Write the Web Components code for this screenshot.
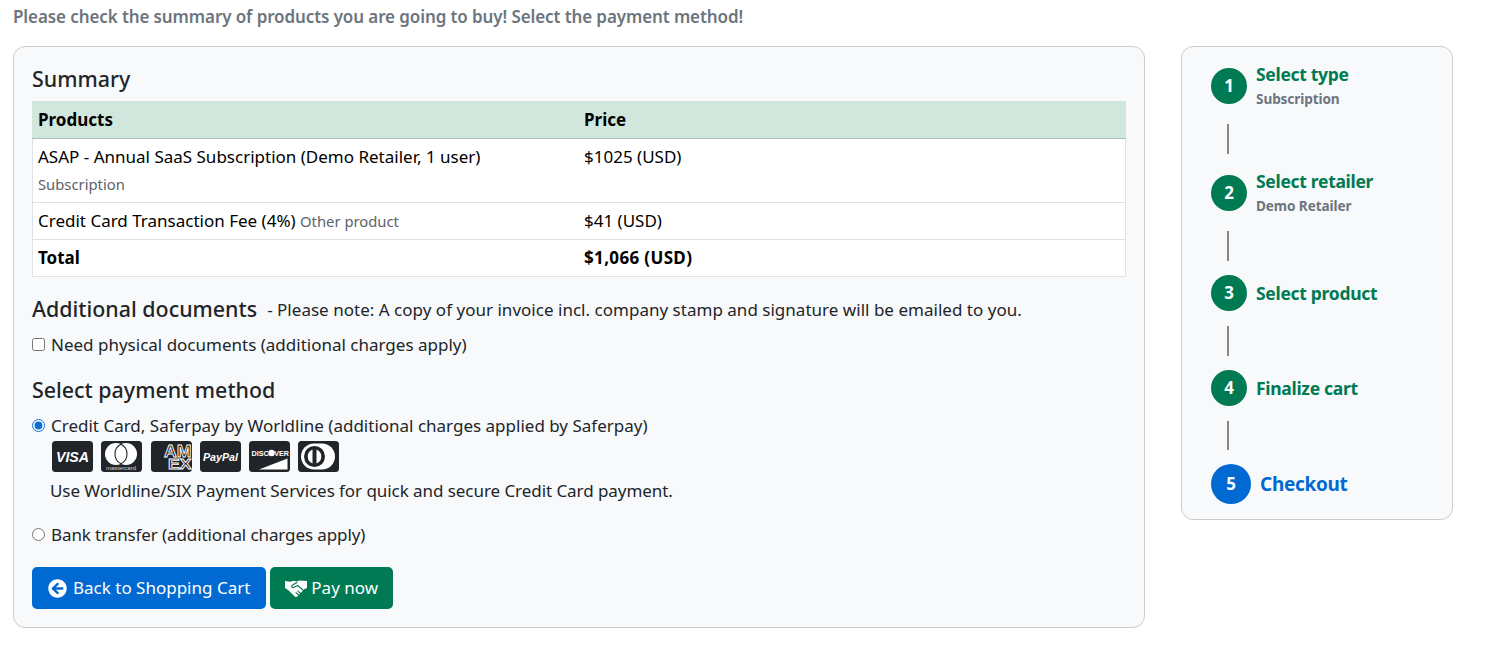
<!DOCTYPE html>
<html lang="en">
<head>
<meta charset="utf-8">
<title>Checkout</title>
<style>
    html, body { margin: 0; padding: 0; background: #fff; }
    body {
        font-family: "Noto Sans", "Open Sans", sans-serif;
        font-size: 17px;
        line-height: 24px;
        color: #212529;
    }
</style>
</head>
<body>
<checkout-page>
    <span slot="intro">Please check the summary of products you are going to buy! Select the payment method!</span>

    <panel-box slot="main" class="main">
        <section-title>Summary</section-title>
        <summary-table></summary-table>

        <docs-note></docs-note>

        <section-title spaced>Select payment method</section-title>
        <pay-option checked>
            Credit Card, Saferpay by Worldline (additional charges applied by Saferpay)
            <card-logos slot="extra"></card-logos>
            <span slot="note">Use Worldline/SIX Payment Services for quick and secure Credit Card payment.</span>
        </pay-option>
        <pay-option><span style="letter-spacing:-.1px">Bank transfer (additional charges apply)</span></pay-option>

        <action-row>
            <action-button color="#0069d2" icon="back">Back to Shopping Cart</action-button>
            <action-button color="#007a53" icon="hands">Pay now</action-button>
        </action-row>
    </panel-box>

    <order-steps slot="side">
        <step-item num="1" title="Select type" sub="Subscription"></step-item>
        <step-item num="2" title="Select retailer" sub="Demo Retailer"></step-item>
        <step-item num="3" title="Select product"></step-item>
        <step-item num="4" title="Finalize cart"></step-item>
        <step-item num="5" title="Checkout" active></step-item>
    </order-steps>
</checkout-page>

<script>
class CheckoutPage extends HTMLElement {
    connectedCallback() {
        const shadow = this.attachShadow({ mode: "open" });
        shadow.innerHTML = `
        <style>
            :host { display: block; padding: 5px 13px 0; }
            .intro { font-weight: 600; color: #6c757d; height: 24px; margin-bottom: 17px; letter-spacing: -.1px; }
            .cols { display: flex; align-items: flex-start; gap: 36px; }
            .left { width: 1132px; flex: none; }
            .right { width: 272px; flex: none; }
        </style>
        <div class="intro"><slot name="intro"></slot></div>
        <div class="cols">
            <div class="left"><slot name="main"></slot></div>
            <div class="right"><slot name="side"></slot></div>
        </div>`;
    }
}
customElements.define("checkout-page", CheckoutPage);

class PanelBox extends HTMLElement {
    connectedCallback() {
        const shadow = this.attachShadow({ mode: "open" });
        shadow.innerHTML = `
        <style>
            :host {
                display: block;
                box-sizing: border-box;
                height: 582px;
                padding: 17px 18px 0;
                background: #f8f9fa;
                border: 1px solid #ccc;
                border-radius: 12px;
            }
        </style>
        <slot></slot>`;
    }
}
customElements.define("panel-box", PanelBox);

class SectionTitle extends HTMLElement {
    connectedCallback() {
        const shadow = this.attachShadow({ mode: "open" });
        shadow.innerHTML = `
        <style>
            :host { display: block; font-size: 21.4px; font-weight: 500; line-height: 30px; height: 37px; }
            :host([spaced]) { height: 39px; }
        </style>
        <slot></slot>`;
    }
}
customElements.define("section-title", SectionTitle);

class SummaryTable extends HTMLElement {
    connectedCallback() {
        const shadow = this.attachShadow({ mode: "open" });
        shadow.innerHTML = `
        <style>
            :host { display: block; margin-bottom: 17px; }
            table { width: 100%; border-collapse: collapse; table-layout: fixed; background: #fff; color: #000; }
            th, td { border: 1px solid #dee2e6; padding: 6px 5px; text-align: left; vertical-align: top; line-height: 24px; }
            th { background: #d1e7dd; font-weight: 700; border-color: #d1e7dd; border-bottom-color: #a8bfb5; }
            th + th { border-left: 0; }
            .cell-b { border-left: 0; }
            .c1 { border-right: 0; }
            small { color: #5c636a; font-size: 14.8px; line-height: 1; }
            .sub { display: block; margin-top: 3px; line-height: 24px; }
            tr.total td { font-weight: 700; }
            tr.total .cell-b { letter-spacing: .35px; }
        </style>
        <table>
            <colgroup><col style="width:50%"><col style="width:50%"></colgroup>
            <tr><th class="c1">Products</th><th>Price</th></tr>
            <tr>
                <td class="c1">ASAP - Annual SaaS Subscription (Demo Retailer, 1 user)<small class="sub">Subscription</small></td>
                <td class="cell-b">$1025 (USD)</td>
            </tr>
            <tr>
                <td class="c1">Credit Card Transaction Fee (4%) <small>Other product</small></td>
                <td class="cell-b">$41 (USD)</td>
            </tr>
            <tr class="total">
                <td class="c1">Total</td>
                <td class="cell-b">$1,066 (USD)</td>
            </tr>
        </table>`;
    }
}
customElements.define("summary-table", SummaryTable);

class DocsNote extends HTMLElement {
    connectedCallback() {
        const shadow = this.attachShadow({ mode: "open" });
        shadow.innerHTML = `
        <style>
            :host { display: block; height: 81px; }
            .head { display: flex; align-items: baseline; gap: 10px; height: 30px; line-height: 30px; }
            b { font-size: 21.4px; font-weight: 500; }
            .head span { letter-spacing: .02px; position: relative; top: -1px; }
            label { display: flex; align-items: center; gap: 6px; margin-top: 9px; height: 24px; }
            input { margin: 0; width: 13px; height: 13px; position: relative; top: -1px; }
        </style>
        <div class="head"><b>Additional documents</b><span>- Please note: A copy of your invoice incl. company stamp and signature will be emailed to you.</span></div>
        <label><input type="checkbox">Need physical documents (additional charges apply)</label>`;
    }
}
customElements.define("docs-note", DocsNote);

class PayOption extends HTMLElement {
    connectedCallback() {
        const shadow = this.attachShadow({ mode: "open" });
        const checked = this.hasAttribute("checked") ? "checked" : "";
        shadow.innerHTML = `
        <style>
            :host { display: block; margin-bottom: 20px; }
            label { display: flex; align-items: center; gap: 6px; height: 24px; }
            input { margin: 0; width: 13px; height: 13px; position: relative; top: -1px; accent-color: #0f6fd8; }
            .extra { padding-left: 20px; }
            .note { padding-left: 18px; margin-top: 7px; letter-spacing: -.06px; }
        </style>
        <label><input type="radio" name="pay" ${checked}><span><slot></slot></span></label>
        <div class="extra"><slot name="extra"></slot></div>
        <div class="note"><slot name="note"></slot></div>`;
    }
}
customElements.define("pay-option", PayOption);

class CardLogos extends HTMLElement {
    connectedCallback() {
        const shadow = this.attachShadow({ mode: "open" });
        const svgFont = `font-family="Liberation Sans, sans-serif"`;
        const box = (inner) => `<svg viewBox="0 0 41 31" width="41" height="31"><rect width="41" height="31" rx="3.5" fill="#212529"/>${inner}</svg>`;
        const amex = `${svgFont} font-weight="700" fill="#212529" stroke="#fff" stroke-width=".8" lengthAdjust="spacingAndGlyphs"`;
        shadow.innerHTML = `
        <style>
            :host { display: flex; gap: 8.3px; padding-top: 3px; height: 31px; }
            svg { display: block; flex: none; }
        </style>
        ${box(`<text x="20.5" y="21" text-anchor="middle" ${svgFont} font-size="14.5" font-weight="700" font-style="italic" fill="#fff" textLength="33" lengthAdjust="spacingAndGlyphs">VISA</text>`)}
        ${box(`<circle cx="15" cy="13" r="11" fill="#fff"/><circle cx="25" cy="13" r="11" fill="#fff"/>
               <path d="M20 3.2a11 11 0 0 1 0 19.6a11 11 0 0 1 0-19.6z" fill="#fff" stroke="#212529" stroke-width="1.1"/>
               <text x="5" y="29.3" ${svgFont} font-size="6" fill="#cfd2d4" textLength="30" lengthAdjust="spacingAndGlyphs">mastercard</text>`)}
        ${box(`<text x="13" y="15.5" font-size="16" textLength="27.5" ${amex}>AM</text>
               <text x="17" y="27.5" font-size="14" textLength="23.5" ${amex}>EX</text>`)}
        ${box(`<text x="20.5" y="20" text-anchor="middle" ${svgFont} font-size="11" font-weight="700" font-style="italic" fill="#fff" textLength="35" lengthAdjust="spacingAndGlyphs">PayPal</text>`)}
        ${box(`<text x="2.5" y="14.5" ${svgFont} font-size="7.2" font-weight="700" fill="#fff">DISCOVER</text>
               <circle cx="22.5" cy="12" r="3.2" fill="#fff"/>
               <path d="M10 28.5L38.5 17.5V28.5z" fill="#fff"/>`)}
        ${box(`<path d="M16 2.5H24a13 13 0 0 1 0 26H16a13 13 0 0 1 0-26z" fill="#fff"/>
               <circle cx="16.5" cy="15.5" r="10.5" fill="#212529"/>
               <path d="M14.5 8.5v14a7.5 7.5 0 0 1 0-14zM18.5 8.5a7.5 7.5 0 0 1 0 14z" fill="#fff"/>`)}
        `;
    }
}
customElements.define("card-logos", CardLogos);

class ActionRow extends HTMLElement {
    connectedCallback() {
        const shadow = this.attachShadow({ mode: "open" });
        shadow.innerHTML = `
        <style>:host { display: flex; gap: 4px; }</style>
        <slot></slot>`;
    }
}
customElements.define("action-row", ActionRow);

class ActionButton extends HTMLElement {
    getIcon() {
        if (this.getAttribute("icon") === "back") {
            return `<svg viewBox="0 0 512 512" width="19" height="19"><path fill="#fff" d="M256 504C119 504 8 393 8 256S119 8 256 8s248 111 248 248-111 248-248 248zm28.9-143.6L209.4 288H392c13.3 0 24-10.7 24-24v-16c0-13.3-10.7-24-24-24H209.4l75.5-72.4c9.7-9.3 9.9-24.8.4-34.3l-11-10.9c-9.4-9.4-24.6-9.4-33.9 0L107.7 239c-9.4 9.4-9.4 24.6 0 33.9l132.7 132.7c9.4 9.4 24.6 9.4 33.9 0l11-10.9c9.5-9.5 9.3-25-.4-34.3z"/></svg>`;
        }
        return `<svg viewBox="0 0 22 17" width="22" height="17">
            <path fill="#fff" d="M0 1l5 .8 3.5-1 3 .8 3-1L22 1v7l-2.5 1-7 7.2c-1 .9-2 .9-3 0L3 10 0 8z"/>
            <path fill="none" stroke="${this.getAttribute("color")}" stroke-width="1.1" stroke-linecap="round" stroke-linejoin="round" d="M12 2.6l-4.5 2.4c-1.4.9-.8 2.8 1 2.6l4.2-2.1 5.8 5M16 14l-3-2.8M13.5 15l-2.5-2.3"/>
        </svg>`;
    }
    connectedCallback() {
        const shadow = this.attachShadow({ mode: "open" });
        const isBack = this.getAttribute("icon") === "back";
        shadow.innerHTML = `
        <style>
            :host { display: block; }
            button {
                display: flex; align-items: center; gap: ${isBack ? 6 : 4}px;
                height: 42px; padding: 0 ${isBack ? 16 : 15}px 0 ${isBack ? 16 : 15}px;
                border: 0; border-radius: 5px;
                background: ${this.getAttribute("color")};
                color: #fff; font: inherit;
            }
        </style>
        <button>${this.getIcon()}<span><slot></slot></span></button>`;
    }
}
customElements.define("action-button", ActionButton);

class OrderSteps extends HTMLElement {
    connectedCallback() {
        const shadow = this.attachShadow({ mode: "open" });
        shadow.innerHTML = `
        <style>
            :host {
                display: flex; flex-direction: column;
                box-sizing: border-box;
                height: 474px;
                padding: 14px 29px 15px;
                background: #f8f9fa;
                border: 1px solid #ccc;
                border-radius: 12px;
            }
        </style>
        <slot></slot>`;
    }
}
customElements.define("order-steps", OrderSteps);

class StepItem extends HTMLElement {
    connectedCallback() {
        const shadow = this.attachShadow({ mode: "open" });
        const active = this.hasAttribute("active");
        const sub = this.getAttribute("sub");
        shadow.innerHTML = `
        <style>
            :host { display: block; }
            .row { display: flex; align-items: center; gap: 9px; height: ${sub ? "49px" : active ? "40px" : "36px"}; }
            .num {
                flex: none; display: flex; align-items: center; justify-content: center;
                width: ${active ? 40 : 36}px; height: ${active ? 40 : 36}px; border-radius: 50%;
                background: ${active ? "#0069d2" : "#007a53"};
                color: #fff; font-weight: 700; font-size: 17px;
            }
            .title {
                color: ${active ? "#0069d2" : "#007a53"}; font-weight: 700;
                font-size: ${active ? 19 : 17.5}px; line-height: 24px; letter-spacing: -.3px;
            }
            .sub { color: #6c757d; font-weight: 700; font-size: 13.6px; line-height: 24px; letter-spacing: -.1px; position: relative; top: 1px; }
            .line { width: 2px; height: 29.5px; margin: ${sub ? "14.25px 0 14.25px" : "15px 0 14px"} 16px; background: #868686; }
        </style>
        <div class="row">
            <div class="num">${this.getAttribute("num")}</div>
            <div>
                <div class="title">${this.getAttribute("title")}</div>
                ${sub ? `<div class="sub">${sub}</div>` : ""}
            </div>
        </div>
        ${active ? "" : `<div class="line"></div>`}`;
    }
}
customElements.define("step-item", StepItem);
</script>
</body>
</html>
